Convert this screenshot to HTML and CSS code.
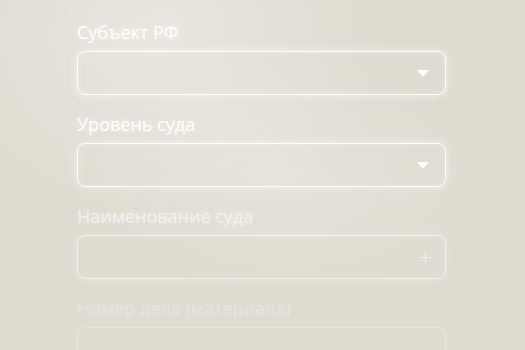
FILE: index.html
```html
<!DOCTYPE html>
<html lang="ru">
<head>
<meta charset="UTF-8">
<title>Поиск дела</title>
<link rel="stylesheet" href="styles.css">
</head>
<body>
    <form class="search-form">
        <div class="field">
            <label class="field-label">Субъект РФ</label>
            <div class="field-box">
                <span class="arrow"></span>
            </div>
        </div>
        <div class="field">
            <label class="field-label">Уровень суда</label>
            <div class="field-box">
                <span class="arrow"></span>
            </div>
        </div>
        <div class="field field-dim">
            <label class="field-label">Наименование суда</label>
            <div class="field-box">
                <svg class="plus" width="13" height="13" viewBox="0 0 13 13">
                    <path d="M6.5 0.5v12M0.5 6.5h12" stroke="#fff" stroke-width="1.2" fill="none"/>
                </svg>
            </div>
        </div>
        <div class="field field-faint">
            <label class="field-label">Номер дела (материала)</label>
            <div class="field-box"></div>
        </div>
    </form>
</body>
</html>
```
FILE: styles.css
```css
html, body {
    height: 100%;
}
body {
    margin: 0;
    font-family: "Open Sans", sans-serif;
    background-color: #dedbd0;
    background-image:
        radial-gradient(ellipse at 30% 10%, rgba(255,255,255,0.3), rgba(255,255,255,0) 45%),
        radial-gradient(ellipse at 55% 50%, rgba(255,255,255,0.2), rgba(255,255,255,0) 50%);
    overflow: hidden;
}
.search-form {
    width: 369px;
    margin-left: 77px;
    padding-top: 21px;
    display: flex;
    flex-direction: column;
    gap: 18px;
}
.field {
    display: flex;
    flex-direction: column;
    gap: 8px;
}
.field-label {
    color: #fff;
    font-size: 18px;
    font-weight: 400;
    line-height: 22px;
    text-shadow: 0 0 10px rgba(255,255,255,0.8);
}
.field-box {
    box-sizing: border-box;
    height: 44px;
    border: 1.5px solid #fff;
    border-radius: 8px;
    box-shadow: 0 0 10px rgba(255,255,255,0.6), inset 0 0 8px rgba(255,255,255,0.3);
    display: flex;
    align-items: center;
    justify-content: flex-end;
    padding-right: 16px;
}
.plus {
    margin-right: -3px;
}
.arrow {
    width: 0;
    height: 0;
    border-left: 6px solid transparent;
    border-right: 6px solid transparent;
    border-top: 7px solid #fff;
}
.field-dim {
    opacity: 0.6;
}
.field-faint {
    opacity: 0.28;
}
```
